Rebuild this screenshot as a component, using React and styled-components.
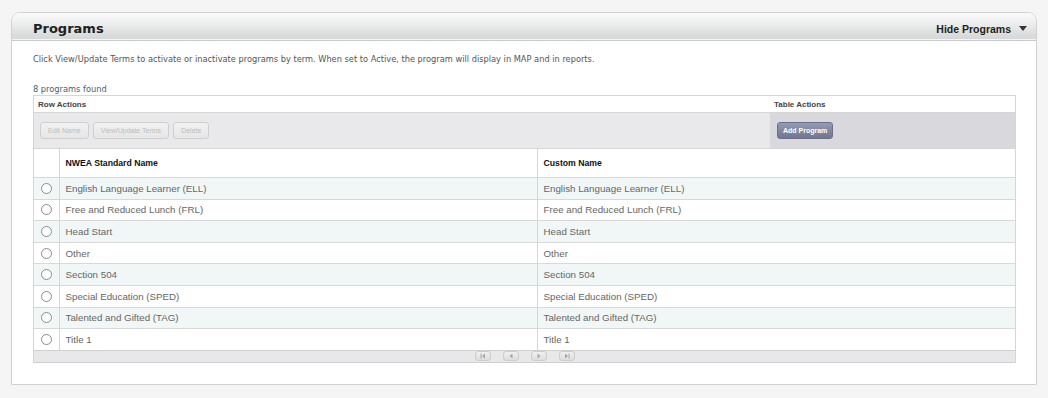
import React from 'react';
import styled, { createGlobalStyle } from 'styled-components';

const GlobalStyle = createGlobalStyle`
  html, body {
    margin: 0;
    padding: 0;
    background-color: #f5f5f5;
  }
  body {
    font-family: "Liberation Sans", Arial, sans-serif;
  }
`;

const Page = styled.div`
  padding: 12px 11px 14px 11px;
`;

const Panel = styled.section`
  width: 1024px;
  height: 371px;
  background-color: #fff;
  border: 1px solid #d2d2d2;
  border-radius: 9px 9px 0 0;
  box-sizing: content-box;
`;

const PanelHeader = styled.header`
  display: flex;
  align-items: center;
  justify-content: space-between;
  height: 27px;
  padding: 0 9px 0 21px;
  border-radius: 8px 8px 0 0;
  background: linear-gradient(to bottom, #fbfbfb 0%, #eaebeb 45%, #d3d5d6 100%);
  border-bottom: 1px solid #c9cbcc;
  box-shadow: inset 0 -1px 0 #f4f4f4;
`;

const Title = styled.h1`
  margin: 0;
  font-family: "DejaVu Sans", Verdana, sans-serif;
  font-size: 13px;
  font-weight: bold;
  color: #222;
  padding-top: 3px;
`;

const Toggle = styled.button`
  display: flex;
  align-items: center;
  gap: 8px;
  border: none;
  background: none;
  padding: 4px 0 0 0;
  font-family: "Liberation Sans", Arial, sans-serif;
  font-size: 10.5px;
  font-weight: bold;
  color: #222;
  cursor: pointer;
`;

const Caret = styled.span`
  width: 0;
  height: 0;
  border-left: 4px solid transparent;
  border-right: 4px solid transparent;
  border-top: 5px solid #333;
`;

const Body = styled.div`
  padding: 13px 20px 0 21px;
`;

const Intro = styled.p`
  margin: 0;
  font-family: "DejaVu Sans", Verdana, sans-serif;
  font-size: 8.25px;
  line-height: 10px;
  color: #555;
`;

const Count = styled.div`
  margin-top: 20px;
  font-family: "DejaVu Sans", Verdana, sans-serif;
  font-size: 8.25px;
  line-height: 10px;
  color: #4d5d78;
`;

const Grid = styled.div`
  margin-top: 1px;
  border: 1px solid #d6d6d6;
  border-bottom-color: #cfcfcf;
`;

const ActionBar = styled.div`
  display: grid;
  grid-template-columns: 736px 1fr;
  grid-template-rows: 17px 35px;
`;

const ActionLabel = styled.div`
  display: flex;
  align-items: center;
  padding-left: 4px;
  font-size: 8px;
  font-weight: bold;
  color: #444;
  border-bottom: 1px solid #d6d6d6;
`;

const ActionCell = styled.div`
  display: flex;
  align-items: center;
  gap: 4px;
  padding-left: ${(p) => p.$indent || 6}px;
  background-color: ${(p) => (p.$dark ? '#d9d8dd' : '#e9e9eb')};
`;

const ActionButton = styled.button`
  height: 17px;
  padding: 0 ${(p) => (p.$primary ? 5 : 7)}px;
  font-family: "Liberation Sans", Arial, sans-serif;
  font-size: 7px;
  border-radius: 3px;
  cursor: ${(p) => (p.disabled ? 'default' : 'pointer')};
  color: ${(p) => (p.$primary ? '#fff' : '#bcbcbc')};
  font-weight: ${(p) => (p.$primary ? 'bold' : 'normal')};
  border: 1px solid ${(p) => (p.$primary ? '#6a7088' : '#cfcfcf')};
  background: ${(p) =>
    p.$primary
      ? 'linear-gradient(to bottom, #959bb3 0%, #70768f 100%)'
      : 'linear-gradient(to bottom, #f1f1f1 0%, #e6e6e6 100%)'};
`;

const Table = styled.table`
  width: 100%;
  border-collapse: collapse;
  table-layout: fixed;
`;

const HeadCell = styled.th`
  height: 28px;
  padding: 0 6px;
  text-align: left;
  font-size: 8.7px;
  font-weight: bold;
  color: #111;
  background-color: #fff;
  border-top: 1px solid #d6d6d6;
  border-left: ${(p) => (p.$first ? 'none' : '1px solid #d6d6d6')};
`;

const Row = styled.tr`
  background-color: ${(p) => (p.$alt ? '#f1f7f7' : '#fff')};
`;

const Cell = styled.td`
  height: 20.6px;
  padding: 0 6px;
  font-size: 9.75px;
  color: #666;
  border-top: 1px solid #d8d8d8;
  border-left: 1px solid #d6d6d6;
  white-space: nowrap;
  overflow: hidden;
`;

const RadioCell = styled.td`
  height: 20.6px;
  padding: 0;
  border-top: 1px solid #d8d8d8;
`;

const Radio = styled.span`
  display: block;
  width: 9px;
  height: 9px;
  margin: 0 auto;
  border: 1px solid #8c8c8c;
  border-radius: 50%;
  background-color: #fff;
`;

const Pager = styled.div`
  display: flex;
  justify-content: center;
  align-items: center;
  gap: 12px;
  height: 11px;
  background-color: #e8e8ea;
  border-top: 1px solid #d0d0d0;
`;

const PageButton = styled.button`
  display: flex;
  align-items: center;
  justify-content: center;
  width: 16px;
  height: 10px;
  padding: 0;
  border: 1px solid #cdcdcd;
  border-radius: 3px;
  background: linear-gradient(to bottom, #f0f0f0, #dedede);
  cursor: default;
`;

const programs = [
  'English Language Learner (ELL)',
  'Free and Reduced Lunch (FRL)',
  'Head Start',
  'Other',
  'Section 504',
  'Special Education (SPED)',
  'Talented and Gifted (TAG)',
  'Title 1',
];

const PagerIcon = ({ type }) => {
  const fill = '#a8a8a8';
  return (
    <svg width="8" height="6" viewBox="0 0 8 6">
      {type === 'first' && (
        <>
          <rect x="1.5" y="0.5" width="1" height="5" fill={fill} />
          <polygon points="6,0.5 6,5.5 3,3" fill={fill} />
        </>
      )}
      {type === 'prev' && <polygon points="5.5,0.5 5.5,5.5 2.5,3" fill={fill} />}
      {type === 'next' && <polygon points="2.5,0.5 2.5,5.5 5.5,3" fill={fill} />}
      {type === 'last' && (
        <>
          <polygon points="2,0.5 2,5.5 5,3" fill={fill} />
          <rect x="5.5" y="0.5" width="1" height="5" fill={fill} />
        </>
      )}
    </svg>
  );
};

export default function App() {
  return (
    <>
      <GlobalStyle />
      <Page>
        <Panel>
          <PanelHeader>
            <Title>Programs</Title>
            <Toggle>
              Hide Programs <Caret />
            </Toggle>
          </PanelHeader>
          <Body>
            <Intro>
              Click View/Update Terms to activate or inactivate programs by term. When set to
              Active, the program will display in MAP and in reports.
            </Intro>
            <Count>8 programs found</Count>
            <Grid>
              <ActionBar>
                <ActionLabel>Row Actions</ActionLabel>
                <ActionLabel>Table Actions</ActionLabel>
                <ActionCell>
                  <ActionButton disabled>Edit Name</ActionButton>
                  <ActionButton disabled>View/Update Terms</ActionButton>
                  <ActionButton disabled>Delete</ActionButton>
                </ActionCell>
                <ActionCell $dark $indent={7}>
                  <ActionButton $primary>Add Program</ActionButton>
                </ActionCell>
              </ActionBar>
              <Table>
                <colgroup>
                  <col style={{ width: 25 }} />
                  <col />
                  <col />
                </colgroup>
                <thead>
                  <tr>
                    <HeadCell $first />
                    <HeadCell>NWEA Standard Name</HeadCell>
                    <HeadCell>Custom Name</HeadCell>
                  </tr>
                </thead>
                <tbody>
                  {programs.map((name, i) => (
                    <Row key={name} $alt={i % 2 === 0}>
                      <RadioCell>
                        <Radio />
                      </RadioCell>
                      <Cell>{name}</Cell>
                      <Cell>{name}</Cell>
                    </Row>
                  ))}
                </tbody>
              </Table>
              <Pager>
                <PageButton><PagerIcon type="first" /></PageButton>
                <PageButton><PagerIcon type="prev" /></PageButton>
                <PageButton><PagerIcon type="next" /></PageButton>
                <PageButton><PagerIcon type="last" /></PageButton>
              </Pager>
            </Grid>
          </Body>
        </Panel>
      </Page>
    </>
  );
}
